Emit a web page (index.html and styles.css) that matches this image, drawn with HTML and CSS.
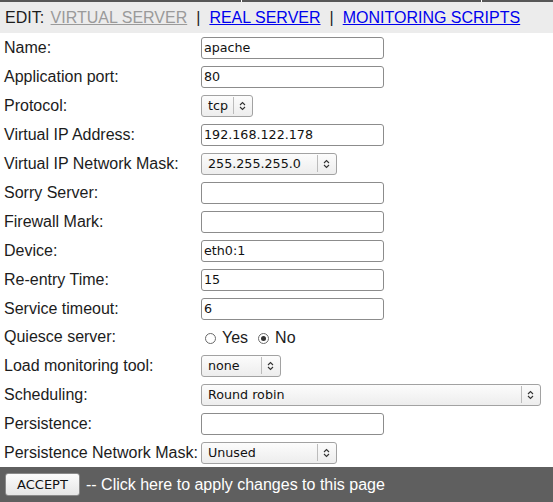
FILE: index.html
```html
<!DOCTYPE html>
<html>
<head>
<meta charset="utf-8">
<link rel="stylesheet" href="styles.css">
</head>
<body>
<div class="topstrip"><span class="c1"></span><span class="c2"></span><span class="c3"></span></div>
<div class="header"><span class="edit">EDIT:</span> <a class="current" href="#">VIRTUAL SERVER</a><span class="pipe">|</span><a href="#">REAL SERVER</a><span class="pipe">|</span><a href="#">MONITORING SCRIPTS</a></div>
<div class="form">
  <div class="row"><div class="label">Name:</div><div class="field"><div class="input">apache</div></div></div>
  <div class="row"><div class="label">Application port:</div><div class="field"><div class="input">80</div></div></div>
  <div class="row"><div class="label">Protocol:</div><div class="field"><div class="select w-tcp"><span class="val">tcp</span><span class="sep"></span><svg class="arr" width="7" height="10" viewBox="0 0 7 10"><path d="M1 4 L3.5 1.5 L6 4 M1 6 L3.5 8.5 L6 6" fill="none" stroke="#333" stroke-width="1.1"/></svg></div></div></div>
  <div class="row"><div class="label">Virtual IP Address:</div><div class="field"><div class="input">192.168.122.178</div></div></div>
  <div class="row"><div class="label">Virtual IP Network Mask:</div><div class="field"><div class="select w-mask"><span class="val">255.255.255.0</span><span class="sep"></span><svg class="arr" width="7" height="10" viewBox="0 0 7 10"><path d="M1 4 L3.5 1.5 L6 4 M1 6 L3.5 8.5 L6 6" fill="none" stroke="#333" stroke-width="1.1"/></svg></div></div></div>
  <div class="row"><div class="label">Sorry Server:</div><div class="field"><div class="input"></div></div></div>
  <div class="row"><div class="label">Firewall Mark:</div><div class="field"><div class="input"></div></div></div>
  <div class="row"><div class="label">Device:</div><div class="field"><div class="input">eth0:1</div></div></div>
  <div class="row"><div class="label">Re-entry Time:</div><div class="field"><div class="input">15</div></div></div>
  <div class="row"><div class="label">Service timeout:</div><div class="field"><div class="input">6</div></div></div>
  <div class="row short"><div class="label">Quiesce server:</div><div class="field radios"><span class="radio"></span><span class="rlabel">Yes</span><span class="radio checked"></span><span class="rlabel">No</span></div></div>
  <div class="row"><div class="label">Load monitoring tool:</div><div class="field"><div class="select w-load"><span class="val">none</span><span class="sep"></span><svg class="arr" width="7" height="10" viewBox="0 0 7 10"><path d="M1 4 L3.5 1.5 L6 4 M1 6 L3.5 8.5 L6 6" fill="none" stroke="#333" stroke-width="1.1"/></svg></div></div></div>
  <div class="row"><div class="label">Scheduling:</div><div class="field"><div class="select w-sched"><span class="val">Round robin</span><span class="sep"></span><svg class="arr" width="7" height="10" viewBox="0 0 7 10"><path d="M1 4 L3.5 1.5 L6 4 M1 6 L3.5 8.5 L6 6" fill="none" stroke="#333" stroke-width="1.1"/></svg></div></div></div>
  <div class="row"><div class="label">Persistence:</div><div class="field"><div class="input"></div></div></div>
  <div class="row"><div class="label">Persistence Network Mask:</div><div class="field"><div class="select w-mask"><span class="val">Unused</span><span class="sep"></span><svg class="arr" width="7" height="10" viewBox="0 0 7 10"><path d="M1 4 L3.5 1.5 L6 4 M1 6 L3.5 8.5 L6 6" fill="none" stroke="#333" stroke-width="1.1"/></svg></div></div></div>
</div>
<div class="footer">
  <button class="accept" type="button">ACCEPT</button><span class="hint">-- Click here to apply changes to this page</span>
</div>
</body>
</html>
```

FILE: styles.css
```css
html, body {
  margin: 0;
  padding: 0;
  background: #ffffff;
}
body {
  font-family: "Liberation Sans", Arial, sans-serif;
  font-size: 16px;
  color: #1c1c1c;
  width: 553px;
  height: 502px;
  overflow: hidden;
}
.topstrip {
  display: flex;
  gap: 1px;
  height: 2px;
}
.topstrip span {
  background: #575757;
}
.topstrip .c1 { width: 241px; }
.topstrip .c2 { width: 239px; }
.topstrip .c3 { flex: 1; }
.header {
  height: 31px;
  line-height: 31px;
  background: #ececec;
  padding-left: 5px;
  white-space: nowrap;
  color: #1c1c1c;
}
.header .edit {
  margin-right: 2px;
}
.header .pipe {
  margin: 0 9px 0 9px;
}
.header a {
  color: #0000ee;
  text-decoration: underline;
}
.header a.current {
  color: #9a9a9a;
}
.form {
  display: flex;
  flex-direction: column;
}
.row {
  display: flex;
  align-items: center;
  height: 29px;
}
.row.short {
  height: 28px;
}
.label {
  width: 201px;
  padding-left: 4px;
  box-sizing: border-box;
  white-space: nowrap;
}
.field {
  display: flex;
  align-items: center;
}
.input {
  width: 183px;
  height: 22px;
  box-sizing: border-box;
  border: 1px solid #8c8c8c;
  border-radius: 3px;
  background: #ffffff;
  font-family: "DejaVu Sans", sans-serif;
  font-size: 12.7px;
  line-height: 20px;
  padding-left: 2px;
  color: #111;
}
.select {
  height: 22px;
  box-sizing: border-box;
  border: 1px solid #a2a2a2;
  border-radius: 3px;
  background: linear-gradient(#fcfcfc, #ededed);
  display: flex;
  align-items: center;
  font-family: "DejaVu Sans", sans-serif;
  font-size: 12.7px;
  color: #111;
}
.select .val {
  flex: 1;
  padding-left: 6px;
  white-space: nowrap;
}
.select .sep {
  width: 1px;
  height: 17px;
  background: #bcbcbc;
  margin-right: 5px;
}
.select .arr {
  margin-right: 6px;
}
.w-tcp { width: 52px; }
.w-mask { width: 136px; }
.w-load { width: 80px; }
.w-sched { width: 340px; }
.radios {
  padding-left: 4px;
  padding-top: 2px;
}
.radio {
  width: 11px;
  height: 11px;
  box-sizing: border-box;
  border: 1px solid #6a6a6a;
  border-radius: 50%;
  background: #fff;
  display: inline-flex;
  align-items: center;
  justify-content: center;
  margin-right: 6px;
}
.radio.checked::after {
  content: "";
  width: 5px;
  height: 5px;
  border-radius: 50%;
  background: #333;
}
.rlabel {
  margin-right: 10px;
}
.footer {
  height: 35px;
  background: #5f5f5f;
  display: flex;
  align-items: center;
  padding-left: 5px;
  box-sizing: border-box;
}
.accept {
  width: 75px;
  height: 23px;
  box-sizing: border-box;
  border: 1px solid #8a8a8a;
  border-radius: 3px;
  background: linear-gradient(#fbfbfb, #e6e6e6);
  font-family: "DejaVu Sans", sans-serif;
  font-size: 13px;
  color: #111;
  padding: 0;
  margin: 0 6px 0 0;
}
.hint {
  color: #ffffff;
}
```
